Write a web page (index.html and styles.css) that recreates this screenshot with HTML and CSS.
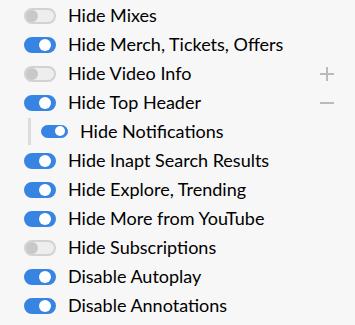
FILE: index.html
```html
<!DOCTYPE html>
<html lang="en">
<head>
    <meta charset="UTF-8">
    <meta name="viewport" content="width=device-width, initial-scale=1.0">
    <title>Options</title>
    <link rel="stylesheet" href="styles.css">
</head>
<body>
    <ul class="options">
        <li class="option"><span class="toggle"></span><span class="label">Hide Mixes</span></li>
        <li class="option"><span class="toggle on"></span><span class="label">Hide Merch, Tickets, Offers</span></li>
        <li class="option"><span class="toggle"></span><span class="label">Hide Video Info</span><span class="expand plus"></span></li>
        <li class="option"><span class="toggle on"></span><span class="label">Hide Top Header</span><span class="expand minus"></span></li>
        <li class="option sub"><span class="toggle on small"></span><span class="label">Hide Notifications</span></li>
        <li class="option"><span class="toggle on"></span><span class="label">Hide Inapt Search Results</span></li>
        <li class="option"><span class="toggle on"></span><span class="label">Hide Explore, Trending</span></li>
        <li class="option"><span class="toggle on"></span><span class="label">Hide More from YouTube</span></li>
        <li class="option"><span class="toggle"></span><span class="label">Hide Subscriptions</span></li>
        <li class="option"><span class="toggle on"></span><span class="label">Disable Autoplay</span></li>
        <li class="option"><span class="toggle on"></span><span class="label">Disable Annotations</span></li>
    </ul>
</body>
</html>
```

FILE: styles.css
```css
body {
    margin: 0;
    background-color: #f7f7f7;
    font-family: Lato, "Liberation Sans", sans-serif;
    color: #000;
}
.options {
    list-style: none;
    margin: 0;
    padding: 1px 21px 0 24px;
}
.option {
    display: flex;
    align-items: center;
    height: 29px;
    font-size: 18px;
}
.toggle {
    position: relative;
    flex: none;
    box-sizing: border-box;
    width: 32px;
    height: 16px;
    border: 2px solid #d2d2d2;
    border-radius: 8px;
    background-color: #eeeeee;
    margin-right: 12px;
}
.toggle::after {
    content: "";
    position: absolute;
    top: 0;
    left: 0;
    width: 12px;
    height: 12px;
    border-radius: 50%;
    background-color: #c8c8c8;
}
.toggle.on {
    background-color: #3884e2;
    border-color: #3884e2;
}
.toggle.on::after {
    left: auto;
    right: 3px;
    background-color: #fff;
}
.toggle.small {
    width: 27px;
    height: 13px;
    border-width: 1.5px;
}
.toggle.small::after {
    width: 10px;
    height: 10px;
    right: 2px;
}
.sub {
    margin-left: 4px;
    padding-left: 10px;
    border-left: 3px solid #dcdcdc;
    height: 27px;
    margin-top: 1px;
    margin-bottom: 1px;
}
.label {
    flex: 1;
    padding-bottom: 2px;
}
.expand {
    position: relative;
    width: 14px;
    height: 14px;
}
.expand::before,
.plus::after {
    content: "";
    position: absolute;
    left: 0;
    top: 6px;
    width: 14px;
    height: 2px;
    background-color: #bbb;
}
.plus::after {
    left: 6px;
    top: 0;
    width: 2px;
    height: 14px;
}
```
